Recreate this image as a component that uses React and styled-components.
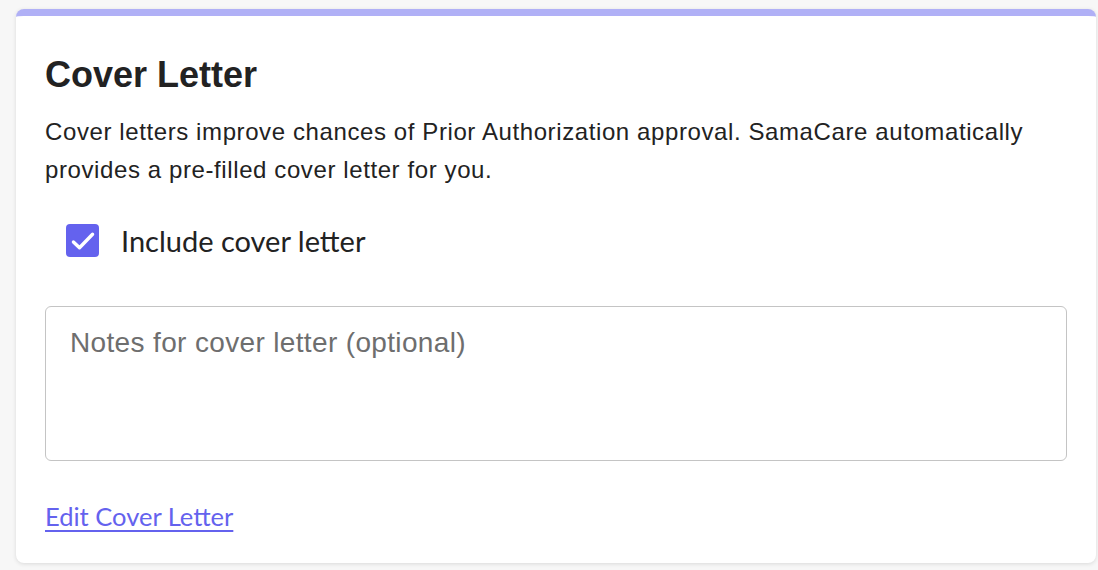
import React, {useState} from 'react';
import styled, {createGlobalStyle} from 'styled-components';

const GlobalStyle = createGlobalStyle`
  html, body {
    margin: 0;
    padding: 0;
    background-color: #f7f7f7;
  }
  * {
    box-sizing: border-box;
  }
`

const Page = styled.div`
  padding: 9px 2px 7px 16px;
`

const Card = styled.section`
  display: flex;
  flex-direction: column;
  background-color: #ffffff;
  border-radius: 8px;
  border-top: 7px solid #b0b0f6;
  box-shadow: 0 1px 4px rgba(0, 0, 0, 0.12);
  padding: 39px 29px 30px 29px;
  height: 554px;
`

const Title = styled.h2`
  margin: 0;
  font-family: "Liberation Sans", Arial, sans-serif;
  font-weight: 700;
  font-size: 36px;
  line-height: 40px;
  color: #222222;
`

const Description = styled.p`
  margin: 18px 0 0 0;
  font-family: "Liberation Sans", Arial, sans-serif;
  font-size: 24px;
  letter-spacing: 0.6px;
  line-height: 38px;
  color: #222222;
`

const CheckRow = styled.label`
  display: flex;
  align-items: center;
  gap: 22px;
  margin: 35px 0 0 21px;
  cursor: pointer;
`

const Box = styled.span`
  display: flex;
  align-items: center;
  justify-content: center;
  width: 33px;
  height: 33px;
  border-radius: 4px;
  background-color: ${p => (p.checked ? '#6462ee' : '#ffffff')};
  border: ${p => (p.checked ? 'none' : '2px solid #bbbbbb')};
`

const CheckLabel = styled.span`
  font-family: Lato, sans-serif;
  font-size: 29px;
  line-height: 33px;
  color: #222222;
`

const Notes = styled.textarea`
  margin-top: 49px;
  width: 100%;
  height: 155px;
  resize: none;
  border: 1px solid #c4c4c4;
  border-radius: 6px;
  padding: 20px 24px;
  font-family: "Liberation Sans", Arial, sans-serif;
  font-size: 28px;
  letter-spacing: 0.35px;
  line-height: 32px;
  color: #222222;
  outline: none;

  &::placeholder {
    color: #6e6e6e;
  }
`

const EditLink = styled.a`
  align-self: flex-start;
  margin-top: 40px;
  font-family: Lato, sans-serif;
  font-size: 25.5px;
  line-height: 30px;
  color: #6462ee;
  text-decoration: underline;
  text-underline-offset: 4px;
  text-decoration-thickness: 1.5px;
  cursor: pointer;
`

const App = () => {
    const [included, setIncluded] = useState(true);

    return (
        <Page>
            <GlobalStyle/>
            <Card>
                <Title>Cover Letter</Title>
                <Description>
                    Cover letters improve chances of Prior Authorization approval. SamaCare automatically
                    provides a pre-filled cover letter for you.
                </Description>
                <CheckRow onClick={() => setIncluded(!included)}>
                    <Box checked={included}>
                        {included ? (
                            <svg width="28" height="28" viewBox="0 0 24 24" fill="none">
                                <path d="M3.8 12.8l5.2 5L20.2 6.2" stroke="#ffffff" strokeWidth="2.9"
                                      strokeLinecap="round" strokeLinejoin="round"/>
                            </svg>
                        ) : null}
                    </Box>
                    <CheckLabel>Include cover letter</CheckLabel>
                </CheckRow>
                <Notes placeholder="Notes for cover letter (optional)"/>
                <EditLink>Edit Cover Letter</EditLink>
            </Card>
        </Page>
    );
};

export default App;
